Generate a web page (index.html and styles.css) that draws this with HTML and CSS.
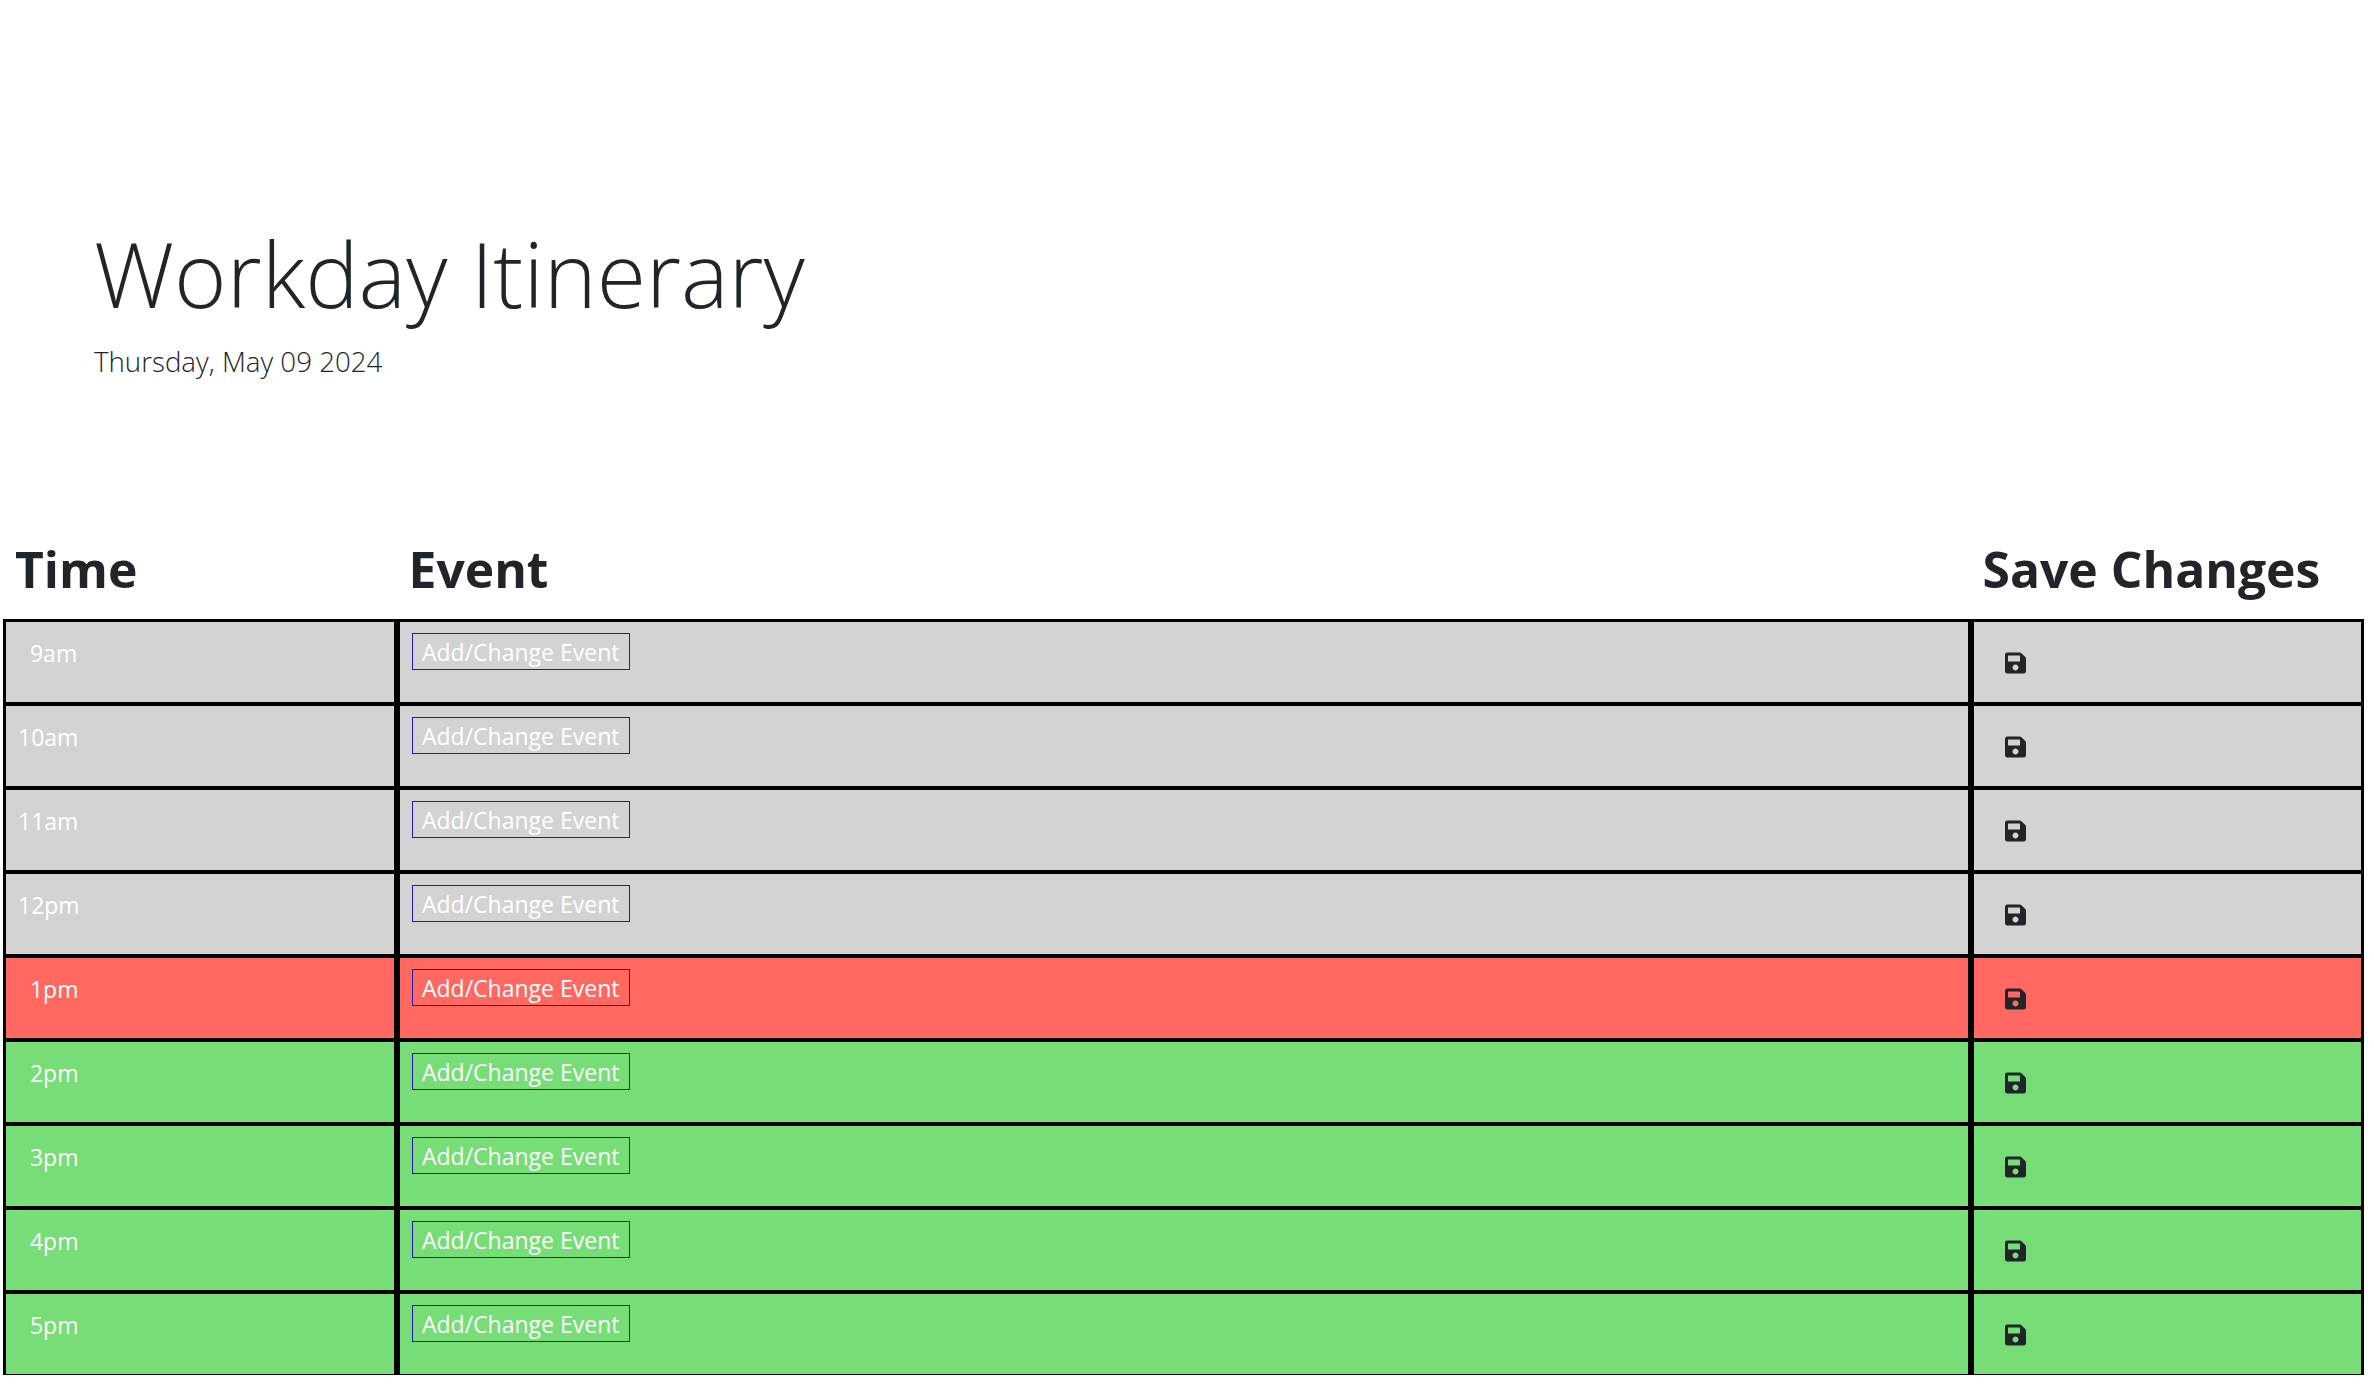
FILE: index.html
```html
<!DOCTYPE html>
<html lang="en">
<head>
    <meta charset="UTF-8">
    <meta name="viewport" content="width=device-width, initial-scale=1.0">
    <title>Workday Itinerary</title>
    <link rel="stylesheet" href="styles.css">
</head>
<body>
    <svg class="sprite" xmlns="http://www.w3.org/2000/svg">
        <symbol id="save" viewBox="0 0 448 512">
            <path d="M433.941 129.941l-83.882-83.882A48 48 0 0 0 316.118 32H48C21.49 32 0 53.49 0 80v352c0 26.51 21.49 48 48 48h352c26.51 0 48-21.49 48-48V163.882a48 48 0 0 0-14.059-33.941zM224 416c-35.346 0-64-28.654-64-64 0-35.346 28.654-64 64-64s64 28.654 64 64c0 35.346-28.654 64-64 64zm96-304.520V212c0 6.627-5.373 12-12 12H76c-6.627 0-12-5.373-12-12V108c0-6.627 5.373-12 12-12h228.520c3.183 0 6.235 1.264 8.485 3.515l3.480 3.480A11.996 11.996 0 0 1 320 111.480z"/>
        </symbol>
    </svg>

    <header class="jumbotron">
        <h1>Workday Itinerary</h1>
        <p class="lead">Thursday, May 09 2024</p>
    </header>

    <main class="planner">
        <div class="row heading">
            <h2>Time</h2>
            <h2>Event</h2>
            <h2>Save Changes</h2>
        </div>

        <!-- Past hours -->
        <div class="row hour past">
            <div class="cell time">&nbsp;&nbsp;9am</div>
            <div class="cell event"><span class="event-text">Add/Change Event</span></div>
            <div class="cell save"><svg class="save-icon"><use href="#save"></use></svg></div>
        </div>
        <div class="row hour past">
            <div class="cell time">10am</div>
            <div class="cell event"><span class="event-text">Add/Change Event</span></div>
            <div class="cell save"><svg class="save-icon"><use href="#save"></use></svg></div>
        </div>
        <div class="row hour past">
            <div class="cell time">11am</div>
            <div class="cell event"><span class="event-text">Add/Change Event</span></div>
            <div class="cell save"><svg class="save-icon"><use href="#save"></use></svg></div>
        </div>
        <div class="row hour past">
            <div class="cell time">12pm</div>
            <div class="cell event"><span class="event-text">Add/Change Event</span></div>
            <div class="cell save"><svg class="save-icon"><use href="#save"></use></svg></div>
        </div>

        <!-- Current hour -->
        <div class="row hour present">
            <div class="cell time">&nbsp;&nbsp;1pm</div>
            <div class="cell event"><span class="event-text">Add/Change Event</span></div>
            <div class="cell save"><svg class="save-icon"><use href="#save"></use></svg></div>
        </div>

        <!-- Upcoming hours -->
        <div class="row hour future">
            <div class="cell time">&nbsp;&nbsp;2pm</div>
            <div class="cell event"><span class="event-text">Add/Change Event</span></div>
            <div class="cell save"><svg class="save-icon"><use href="#save"></use></svg></div>
        </div>
        <div class="row hour future">
            <div class="cell time">&nbsp;&nbsp;3pm</div>
            <div class="cell event"><span class="event-text">Add/Change Event</span></div>
            <div class="cell save"><svg class="save-icon"><use href="#save"></use></svg></div>
        </div>
        <div class="row hour future">
            <div class="cell time">&nbsp;&nbsp;4pm</div>
            <div class="cell event"><span class="event-text">Add/Change Event</span></div>
            <div class="cell save"><svg class="save-icon"><use href="#save"></use></svg></div>
        </div>
        <div class="row hour future">
            <div class="cell time">&nbsp;&nbsp;5pm</div>
            <div class="cell event"><span class="event-text">Add/Change Event</span></div>
            <div class="cell save"><svg class="save-icon"><use href="#save"></use></svg></div>
        </div>
    </main>
</body>
</html>
```

FILE: styles.css
```css
/* Basic styling for the page */
body {
    font-family: "Open Sans", "Noto Sans", sans-serif;
    margin: 0;
    background-color: #fff;
    color: #212529;
}
.sprite {
    display: none;
}
.jumbotron {
    height: 539px;
    box-sizing: border-box;
    padding: 219px 94px 0;
}
h1 {
    font-size: 89.8px;
    font-weight: 300;
    line-height: 108px;
    margin: 0;
}
.lead {
    font-size: 27.7px;
    font-weight: 300;
    line-height: 42px;
    margin: 13px 0 0;
}
.planner {
    margin: 0 10px 0 3px;
}
.row {
    display: grid;
    grid-template-columns: 2fr 8fr 2fr;
}
.heading {
    height: 80px;
}
h2 {
    font-size: 49.8px;
    font-weight: 700;
    line-height: 58px;
    margin: 0;
    padding: 1px 12px 0;
}
.hour {
    height: 84px;
    color: #fff;
    font-size: 23px;
}
/* first line is 1px thinner, last row closes with a 1px line */
.heading + .hour {
    height: 83px;
}
.hour:last-child {
    height: 85px;
}
.past {
    background-color: #d3d3d3;
}
.present {
    background-color: #ff6961;
}
.future {
    background-color: #77dd77;
}
.cell {
    box-sizing: border-box;
    border: solid #000;
    border-width: 4px 3px 0;
    padding: 11px 12px 0;
}
.heading + .hour .cell {
    border-top-width: 3px;
}
.hour:last-child .cell {
    border-bottom-width: 1px;
}
.event-text {
    display: inline-block;
    box-sizing: border-box;
    width: 218px;
    height: 37px;
    line-height: 37px;
    border: 1px solid #2518b4;
    padding: 0 9.5px;
    white-space: nowrap;
}
.time {
    padding-top: 15px;
}
.save {
    padding-top: 29px;
    padding-left: 31px;
}
.save-icon {
    display: block;
    width: 21px;
    height: 24px;
    fill: #212529;
}
```
